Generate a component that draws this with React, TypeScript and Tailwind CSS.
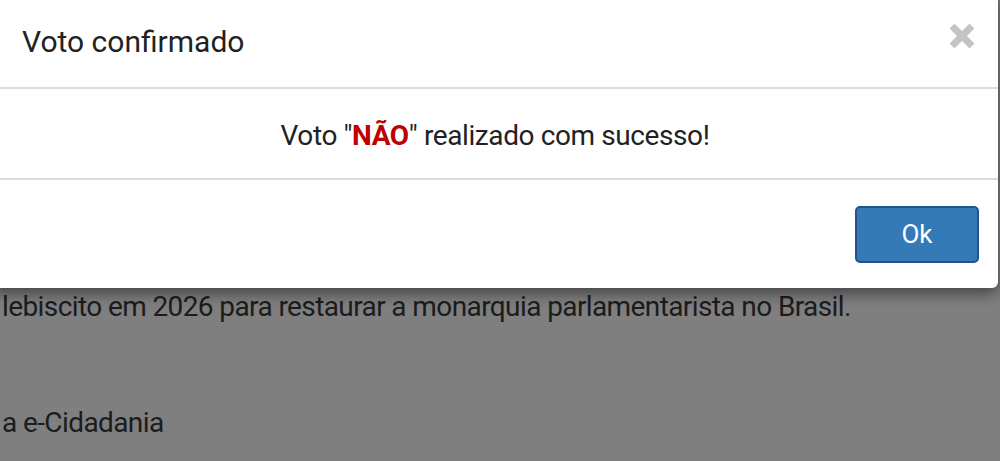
export default function App() {
  return (
    <div className="relative h-[461px] w-[1000px] overflow-hidden bg-[#7f7f7f] font-['Roboto',sans-serif] text-[#1c1c1c]">
      <div className="pl-[2px] pt-[289px] text-[28px] leading-[36px] tracking-[-0.6px]">
        <p>lebiscito em 2026 para restaurar a monarquia parlamentarista no Brasil.</p>
        <p className="mt-[80px]">a e-Cidadania</p>
      </div>

      <div className="absolute left-[-8px] top-[-8px] w-[1006px] rounded-md bg-white text-[#222] shadow-[0_5px_15px_rgba(0,0,0,0.5)]">
        <div className="flex h-[97px] items-center justify-between border-b-2 border-[#dcdcdc] pl-[30px] pr-[22px] pt-[4px]">
          <h4 className="text-[30px] font-normal">Voto confirmado</h4>
          <button className="mb-[12px] text-[#c4c4c4]" aria-label="Fechar">
            <svg width="28" height="28" viewBox="0 0 28 28">
              <path d="M4 4 L24 24 M24 4 L4 24" stroke="currentColor" strokeWidth="7" strokeLinecap="butt" />
            </svg>
          </button>
        </div>
        <div className="flex h-[91px] items-center justify-center border-b-2 border-[#dcdcdc] pt-[5px] text-[28px] tracking-[-0.4px]">
          <p>
            Voto "<span className="font-bold text-[#c00000]">NÃO</span>" realizado com sucesso!
          </p>
        </div>
        <div className="flex justify-end pb-[25px] pr-[19px] pt-[26px]">
          <button className="h-[57px] w-[124px] rounded-[5px] border-2 border-[#1f5490] bg-[#337ab7] text-[26px] text-white">
            Ok
          </button>
        </div>
      </div>
    </div>
  );
}
